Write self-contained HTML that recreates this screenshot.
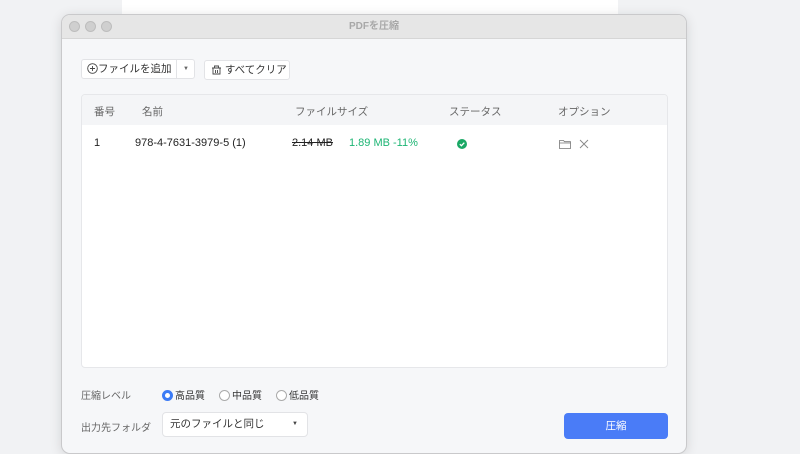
<!DOCTYPE html>
<html><head><meta charset="utf-8"><style>
*{margin:0;padding:0;box-sizing:border-box}
body{width:800px;height:450px;overflow:hidden;background:#f1f2f4;font-family:"Liberation Sans","Noto Sans CJK JP",sans-serif;position:relative}
.top{position:absolute;left:122px;top:0;width:496px;height:14px;background:#fff}
.win{position:absolute;left:61px;top:14px;width:626px;height:440px;background:#f6f7f9;border:1px solid #c9c9cb;border-radius:9px;overflow:hidden;box-shadow:0 2px 12px rgba(0,0,0,.12)}
.tb{height:24px;background:#e6e6e6;border-bottom:1px solid #d6d6d6;position:relative;text-align:center;font-size:10px;font-weight:bold;color:#a8a8a8;line-height:23px}
.dot{position:absolute;top:6px;width:11px;height:11px;border-radius:50%;background:#cfcfcf;border:1px solid #bdbdbd}
.a{position:absolute;font-size:10px;color:#333}
.btn{position:absolute;background:#fff;border:1px solid #e2e3e6;border-radius:3px;font-size:10.5px;color:#333;line-height:18px}
.tbl{position:absolute;left:19px;top:79px;width:587px;height:274px;background:#fff;border:1px solid #e6e7ea;border-radius:4px;overflow:hidden}
.th{height:30px;background:#f4f5f7;position:relative;color:#666;font-size:10.5px}
.th span,.tr span{position:absolute;top:9px}
.tr{position:relative;height:38px;font-size:11px;color:#222}
.tr span{top:12px}
.radio{display:inline-block;width:11px;height:11px;border-radius:50%;border:1px solid #aaa;vertical-align:-2px;margin-right:2px;background:#fff}
</style></head><body>
<div class="top"></div>
<div class="win">
 <div class="tb"><div class="dot" style="left:7px"></div><div class="dot" style="left:23px"></div><div class="dot" style="left:39px"></div>PDFを圧縮</div>
 <div class="btn" style="left:19px;top:44px;width:114px;height:20px"><span style="padding-left:5px"><svg width="11" height="11" viewBox="0 0 11 11" style="vertical-align:-2px"><circle cx="5.5" cy="5.5" r="4.8" fill="none" stroke="#444" stroke-width=".9"/><path d="M5.5 3v5M3 5.5h5" stroke="#444" stroke-width=".9"/></svg>ファイルを追加</span><span style="position:absolute;left:94px;top:0;height:18px;border-left:1px solid #e2e3e6;width:19px;text-align:center;font-size:6px;color:#666">▼</span></div>
 <div class="btn" style="left:142px;top:45px;width:86px;height:20px;padding-left:6px"><svg width="11" height="11" viewBox="0 0 11 11" style="vertical-align:-2px"><path d="M1 4h9M2 4v6h7V4M3.5 4V2h4v2M4.5 6v3M6.5 6v3" fill="none" stroke="#444" stroke-width=".9"/></svg> すべてクリア</div>
 <div class="tbl">
  <div class="th"><span style="left:12px">番号</span><span style="left:60px">名前</span><span style="left:213px">ファイルサイズ</span><span style="left:367px">ステータス</span><span style="left:476px">オプション</span></div>
  <div class="tr"><span style="left:12px">1</span><span style="left:53px">978-4-7631-3979-5 (1)</span><span style="left:210px;text-decoration:line-through">2.14 MB</span><span style="left:267px;color:#1db574">1.89 MB -11%</span>
   <span style="left:375px;top:14px;width:10px;height:10px;border-radius:50%;background:#1aa865"><svg width="10" height="10" viewBox="0 0 10 10" style="display:block"><path d="M2.8 5.2l1.6 1.5 2.9-3" fill="none" stroke="#fff" stroke-width="1.3"/></svg></span>
   <span style="left:477px;top:14px"><svg width="12" height="10" viewBox="0 0 12 10"><path d="M.5 1.5h4l1 1.2h6v6.8H.5zM.5 4h11" fill="none" stroke="#777" stroke-width=".8"/></svg></span>
   <span style="left:497px;top:14px"><svg width="10" height="10" viewBox="0 0 10 10"><path d="M1 1l8 8M9 1L1 9" stroke="#888" stroke-width=".9"/></svg></span></div>
 </div>
 <div class="a" style="left:19px;top:372px;color:#666">圧縮レベル</div>
 <div class="a" style="left:100px;top:372px"><span class="radio" style="border:3px solid #3b7bf6"></span>高品質</div>
 <div class="a" style="left:157px;top:372px"><span class="radio"></span>中品質</div>
 <div class="a" style="left:214px;top:372px"><span class="radio"></span>低品質</div>
 <div class="a" style="left:19px;top:404px;color:#666">出力先フォルダ</div>
 <div class="btn" style="left:100px;top:397px;width:146px;height:25px;line-height:23px;padding-left:7px;border-radius:4px">元のファイルと同じ<span style="position:absolute;right:9px;font-size:6px;color:#444">▼</span></div>
 <div class="btn" style="left:502px;top:398px;width:104px;height:26px;line-height:26px;background:#4a7cf7;border:none;color:#fff;text-align:center;border-radius:4px">圧縮</div>
</div>
</body></html>
